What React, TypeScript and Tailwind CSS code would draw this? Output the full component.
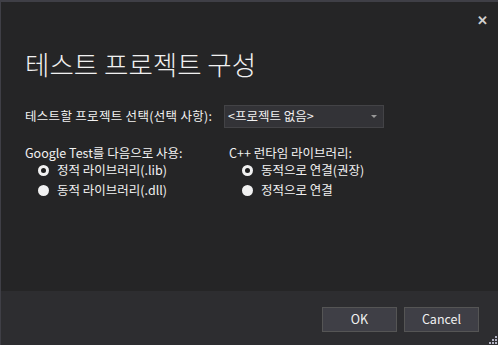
import React from 'react'

const font = { fontFamily: '"Noto Sans CJK KR", "Noto Sans", sans-serif' }

function Radio({ checked, label }: { checked?: boolean; label: string }) {
  return (
    <label className="flex items-center h-[20px] gap-[8px] text-[12.5px] text-[#f1f1f1]">
      <span className="w-[11px] h-[11px] rounded-full bg-[#f1f1f1] flex items-center justify-center">
        {checked && <span className="w-[5px] h-[5px] rounded-full bg-[#1e1e1e]" />}
      </span>
      {label}
    </label>
  )
}

export default function App() {
  return (
    <div style={font} className="w-[498px] h-[345px] bg-[#3f3f46] pt-[2px] pl-[1px] flex flex-col">
      <div className="flex-1 bg-[#252526] flex flex-col">
        <div className="flex justify-end h-[30px] items-start pt-[11px] pr-[10px]">
          <span className="text-[#d0d0d0] text-[13px] font-bold leading-none">✕</span>
        </div>
        <div className="pl-[24px] pr-[20px]">
          <h1 className="text-[26.5px] font-light text-[#f1f1f1] leading-none mt-[19px]">테스트 프로젝트 구성</h1>
          <div className="flex items-center mt-[27px] text-[12.5px] text-[#f1f1f1]">
            <span className="w-[199px] tracking-[0.3px]">테스트할 프로젝트 선택(선택 사항):</span>
            <div className="w-[160px] h-[23px] bg-[#333337] border border-[#434346] flex items-center justify-between pl-[3px] pr-[6px]">
              <span>&lt;프로젝트 없음&gt;</span>
              <svg width="6" height="3" viewBox="0 0 6 3">
                <path d="M0 0h6L3 3z" fill="#999999" />
              </svg>
            </div>
          </div>
          <div className="flex mt-[17px]">
            <div className="w-[204px]">
              <div className="text-[12.5px] text-[#f1f1f1] h-[16px] leading-[16px]">Google Test를 다음으로 사용:</div>
              <div className="pl-[13px]">
                <Radio checked label="정적 라이브러리(.lib)" />
                <Radio label="동적 라이브러리(.dll)" />
              </div>
            </div>
            <div>
              <div className="text-[12.5px] text-[#f1f1f1] h-[16px] leading-[16px]">C++ 런타임 라이브러리:</div>
              <div className="pl-[13px]">
                <Radio checked label="동적으로 연결(권장)" />
                <Radio label="정적으로 연결" />
              </div>
            </div>
          </div>
        </div>
        <div className="flex-1" />
        <div className="h-[54px] bg-[#2d2d30] flex items-start justify-end gap-[7px] pt-[16px] pr-[19px] relative">
          <button className="w-[75px] h-[25px] bg-[#3f3f46] border border-[#555555] text-[12.5px] text-[#f1f1f1]">OK</button>
          <button className="w-[75px] h-[25px] bg-[#3f3f46] border border-[#555555] text-[12.5px] text-[#f1f1f1]">Cancel</button>
          <svg className="absolute right-[1px] bottom-[1px]" width="10" height="10" viewBox="0 0 10 10">
            <rect x="8" y="2" width="2" height="2" fill="#b0b0c0" />
            <rect x="5" y="5" width="2" height="2" fill="#b0b0c0" />
            <rect x="8" y="5" width="2" height="2" fill="#b0b0c0" />
            <rect x="2" y="8" width="2" height="2" fill="#b0b0c0" />
            <rect x="5" y="8" width="2" height="2" fill="#b0b0c0" />
            <rect x="8" y="8" width="2" height="2" fill="#b0b0c0" />
          </svg>
        </div>
      </div>
    </div>
  )
}
